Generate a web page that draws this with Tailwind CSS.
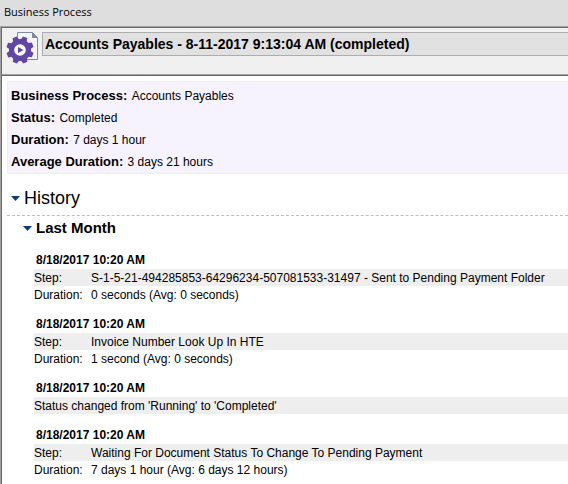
<!DOCTYPE html>
<html lang="en">
<head>
  <meta charset="UTF-8" />
  <meta name="viewport" content="width=device-width, initial-scale=1.0" />
  <title>Business Process</title>
  <script src="https://cdn.jsdelivr.net/npm/@tailwindcss/browser@4"></script>
</head>
<body class="min-h-screen flex flex-col overflow-x-hidden bg-[#dedede] text-black font-['Liberation_Sans',Arial,sans-serif]">
  <div class="h-[26px] shrink-0 px-1 text-[11px] leading-[24px] font-['Open_Sans','Segoe_UI',sans-serif]">Business Process</div>

  <div class="grow flex flex-col border-l border-t border-[#a0a0a0]">
    <div class="grow flex flex-col border-l border-t border-[#696969] bg-white">

      <!-- Header -->
      <header class="h-[46px] flex items-start gap-1 pl-1 pt-1 bg-[#f0f0f0]">
        <svg class="w-8 h-8 shrink-0" viewBox="0 0 32 32" fill="none">
          <path d="M11.5 .5H26.5L31.5 5.500V27.500H11.500Z" fill="#f3f5f8" stroke="#7d8b9b" />
          <path d="M26 0L32 6H26Z" fill="#7d8b9b" />
          <g fill="#6246a3">
            <circle cx="14" cy="18" r="11" />
            <g id="teeth">
              <path id="tooth" d="M10.500 9L11.800 4.300H16.200L17.500 9Z" transform="rotate(22 14 18)" />
              <use href="#tooth" transform="rotate(45 14 18)" />
              <use href="#tooth" transform="rotate(90 14 18)" />
              <use href="#tooth" transform="rotate(135 14 18)" />
            </g>
            <use href="#teeth" transform="rotate(180 14 18)" />
          </g>
          <circle cx="14" cy="18" r="5.800" fill="#fff" />
          <path d="M12 15L17.500 18L12 21Z" fill="#6246a3" />
        </svg>
        <input type="text" readonly aria-label="Process instance" value="Accounts Payables - 8-11-2017 9:13:04 AM (completed)" class="grow min-w-0 h-6 pl-[2px] border border-r-0 border-[#adadad] bg-[#e1e1e1] text-[14px] font-bold outline-none" />
      </header>
      <div class="h-[2px] border-t border-[#a0a0a0] bg-[#696969]"></div>

      <main class="pl-[5px] pt-[5px]">
        <!-- Summary -->
        <section class="border border-r-0 border-[#eeeeee] bg-[#f6f3ff] pl-[3px] pt-[3px] text-[12px] leading-[22px]">
          <p class="h-[22px]"><b class="text-[13px]">Business Process:</b> <span class="pl-px">Accounts Payables</span></p>
          <p class="h-[22px]"><b class="text-[13px]">Status:</b> <span class="pl-px">Completed</span></p>
          <p class="h-[22px]"><b class="text-[13px]">Duration:</b> <span class="pl-px">7 days 1 hour</span></p>
          <p class="h-[22px]"><b class="text-[13px]">Average Duration:</b> <span class="pl-px">3 days 21 hours</span></p>
        </section>

        <!-- History -->
        <details open class="pt-[10px]">
          <summary class="flex items-center gap-1 h-8 pb-[2px] pl-1 border-b border-dashed border-[#bdbdbd] text-[18px] cursor-pointer">
            <svg class="w-[9px] h-[5px]" viewBox="0 0 9 5"><path d="M0 0H9L4.500 5Z" fill="#0c3f7c" /></svg>
            <h2>History</h2>
          </summary>

          <details open class="pl-4">
            <summary class="flex items-center gap-1 h-6 text-[15px] font-bold cursor-pointer">
              <svg class="w-[9px] h-[5px]" viewBox="0 0 9 5"><path d="M0 0H9L4.500 5Z" fill="#0c3f7c" /></svg>
              <h3>Last Month</h3>
            </summary>

            <div class="flex flex-col gap-3 pt-3 pl-[11px] text-[12px] leading-4 whitespace-nowrap">
              <div>
                <h4 class="pl-[2px] py-px leading-[15px] font-bold">8/18/2017 10:20 AM</h4>
                <table class="w-full">
                  <tr class="bg-[#eeeeee]"><th class="w-[57px] p-0 pt-px text-left font-normal">Step:</th><td class="p-0 pt-px">S-1-5-21-494285853-64296234-507081533-31497 - Sent to Pending Payment Folder</td></tr>
                  <tr><th class="w-[57px] p-0 pt-px text-left font-normal">Duration:</th><td class="p-0 pt-px">0 seconds (Avg: 0 seconds)</td></tr>
                </table>
              </div>
              <div class="pt-px">
                <h4 class="pl-[2px] py-px leading-[15px] font-bold">8/18/2017 10:20 AM</h4>
                <table class="w-full">
                  <tr class="bg-[#eeeeee]"><th class="w-[57px] p-0 pt-px text-left font-normal">Step:</th><td class="p-0 pt-px">Invoice Number Look Up In HTE</td></tr>
                  <tr><th class="w-[57px] p-0 pt-px text-left font-normal">Duration:</th><td class="p-0 pt-px">1 second (Avg: 0 seconds)</td></tr>
                </table>
              </div>
              <div class="pt-px">
                <h4 class="pl-[2px] py-px leading-[15px] font-bold">8/18/2017 10:20 AM</h4>
                <p class="pt-px bg-[#eeeeee]">Status changed from 'Running' to 'Completed'</p>
              </div>
              <div class="pt-px">
                <h4 class="pl-[2px] py-px leading-[15px] font-bold">8/18/2017 10:20 AM</h4>
                <table class="w-full">
                  <tr class="bg-[#eeeeee]"><th class="w-[57px] p-0 pt-px text-left font-normal">Step:</th><td class="p-0 pt-px">Waiting For Document Status To Change To Pending Payment</td></tr>
                  <tr><th class="w-[57px] p-0 pt-px text-left font-normal">Duration:</th><td class="p-0 pt-px">7 days 1 hour (Avg: 6 days 12 hours)</td></tr>
                </table>
              </div>
            </div>
          </details>
        </details>
      </main>
    </div>
  </div>
</body>
</html>
